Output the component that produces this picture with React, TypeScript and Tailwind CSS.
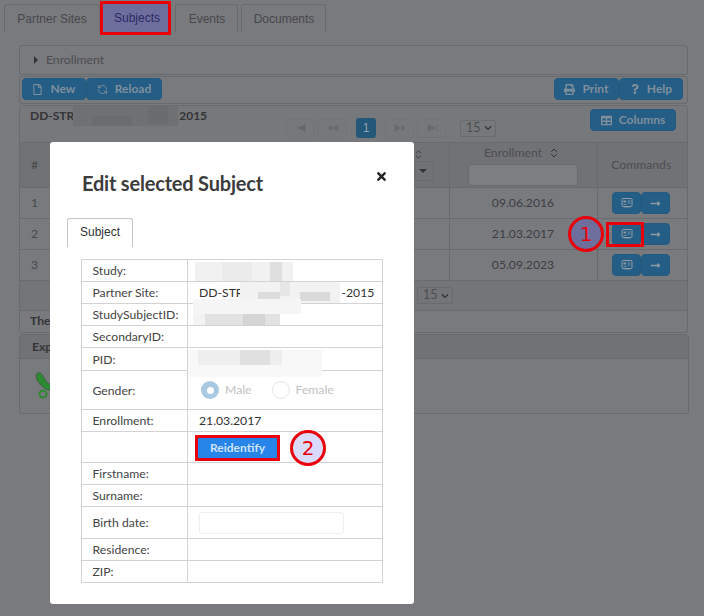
import { ChevronsUpDown, RefreshCcw } from 'lucide-react'
import { FaChevronDown, FaLongArrowAltRight, FaPrint, FaQuestion, FaRegFile, FaTable, FaTimes } from 'react-icons/fa'

const btn = 'flex items-center justify-center gap-[7px] h-[22px] rounded-[4px] bg-[#245e87] border border-[#235a80] text-[12px] font-bold text-[#7f8e9b]'
const line = 'border-[#6a6b6e]'

// pixelated redaction cells: [left, top, width, height, colour]
type Cell = [number, number, number, number, string]

function Blur({ cells }: { cells: Cell[] }) {
 return (
  <>
   {cells.map(([left, top, width, height, background], i) => (
    <span key={i} className="absolute block" style={{ left, top, width, height, background }} />
   ))}
  </>
 )
}

function PagerIcon({ d }: { d: string }) {
 return (
  <svg width="14" height="8" viewBox="0 0 14 8" fill="#68696c" stroke="#68696c" strokeWidth="0.6">
   <path d={d} />
  </svg>
 )
}

function Pager() {
 const box = 'flex items-center justify-center w-[29px] h-[19px] rounded-[3px] border border-[#737478]'
 return (
  <div className="flex items-center">
   <span className={`${box} mr-[3px]`}><PagerIcon d="M2 0.5V7.5M11 0.5V7.5L4 4Z" /></span>
   <span className={`${box} mr-[9px]`}><PagerIcon d="M12 0.5V7.5L7 4ZM6 1L2 4L6 7" /></span>
   <span className="flex items-center justify-center w-5 h-5 rounded-[3px] bg-[#235878] font-['Liberation_Sans',sans-serif] text-[12px] text-[#8fa2b0] mr-[9px]">1</span>
   <span className={`${box} mr-[3px]`}><PagerIcon d="M2 0.5V7.5L7 4ZM8 1L12 4L8 7" /></span>
   <span className={`${box} mr-[14px]`}><PagerIcon d="M3 0.5V7.5L10 4ZM12 0.5V7.5" /></span>
   <PageSize />
  </div>
 )
}

function PageSize() {
 return (
  <span className={`flex items-center gap-[3px] w-9 h-[17px] pl-[5px] rounded-[2px] border ${line} text-[12.5px] text-[#4c4d50]`}>
   15 <FaChevronDown className="text-[8px] text-[#333436]" />
  </span>
 )
}

function CardIcon() {
 return (
  <svg width="12" height="11" viewBox="0 0 12 11" fill="none" stroke="#8f9aa3">
   <rect x="1" y="0.5" width="10" height="8" rx="1" />
   <rect x="2.5" y="2.5" width="2.5" height="2" fill="#8f9aa3" stroke="none" />
   <path d="M2.5 6.5H5.5M6.5 3H9.5M6.5 5H9.5M4 8.5V10M6 8.5V10M8 8.5V10" strokeWidth="0.8" />
  </svg>
 )
}

function RowActions({ hot }: { hot?: boolean }) {
 return (
  <div className="flex justify-center pr-[2px]">
   <span className={`${btn} w-[29px] ${hot ? 'bg-[#1f4a90] border-[#1f4a90]' : ''}`}><CardIcon /></span>
   <span className={`${btn} w-[29px]`}><FaLongArrowAltRight className="text-[11px] text-[#8f9aa3]" /></span>
  </div>
 )
}

function BackgroundPage() {
 const rows = [
  ['1', '09.06.2016'],
  ['2', '21.03.2017'],
  ['3', '05.09.2023'],
 ]
 const tab = `flex items-center justify-center rounded-t-[3px] border border-b-0 ${line}`
 return (
  <div className="h-[616px] bg-[#797a7e] font-['Lato',sans-serif] text-[12.2px] text-[#3d3e41] overflow-hidden">
   <div className="flex h-[28px] mt-1 pl-1 font-['Liberation_Sans',sans-serif] text-[12px] text-[#47484b]">
    <div className={`${tab} w-[96px]`}>Partner Sites</div>
    <div className="flex items-center justify-center w-[66px] ml-[3px] pl-[2px] bg-[#6e6e9c] text-[#2b2b66]">Subjects</div>
    <div className={`${tab} w-[63px] ml-[6px] pl-[1px]`}>Events</div>
    <div className={`${tab} w-[85px] ml-[3px] pl-[1px]`}>Documents</div>
   </div>
   <div className="ml-[19px] w-[669px] mt-[13px]">
    <div className={`flex items-center h-[30px] pl-[14px] gap-[8px] rounded-[3px] border ${line} text-[#4c4d50]`}>
     <span className="w-0 h-0 border-y-[4px] border-y-transparent border-l-[4px] border-l-[#333436]" />
     Enrollment
    </div>
    <div className={`flex justify-between h-[28px] mt-[1px] pt-[1px] pl-[2px] pr-[4px] rounded-[3px] border ${line}`}>
     <div className="flex">
      <span className={`${btn} w-[64px]`}><FaRegFile className="text-[11px]" />New</span>
      <span className={`${btn} w-[76px]`}><RefreshCcw size={11} />Reload</span>
     </div>
     <div className="flex">
      <span className={`${btn} w-[65px]`}><FaPrint className="text-[11px]" />Print</span>
      <span className={`${btn} w-[64px]`}><FaQuestion className="text-[10px]" />Help</span>
     </div>
    </div>
    <div className={`relative mt-[1px] rounded-[3px] border ${line}`}>
     <div className="relative h-[36px] pl-[10px] pt-[1px] text-[12px] font-bold text-[#333436] bg-[#77787c]">
      DD-STR<span className="inline-block w-[105px] h-[13px]" />2015
      <Blur cells={[[53, 0, 105, 20, '#6f7074'], [72, 10, 40, 10, '#6b6c70'], [128, 0, 20, 18, '#6b6c70']]} />
     </div>
     <span className={`${btn} absolute right-[11px] top-[3px] w-[86px]`}><FaTable className="text-[11px]" />Columns</span>
     <div className="absolute top-[12px] left-[266px]"><Pager /></div>
     <table className="w-full border-collapse table-fixed">
      <thead>
       <tr className={`h-[45px] bg-[#717276] border-y ${line}`}>
        <th className="w-[30px] font-normal text-left pl-[11px] text-[#47484b]">#</th>
        <th className="font-normal">
         <div className="flex flex-col items-end pr-[15px] text-[#333436]">
          <ChevronsUpDown size={11} className="mb-[1px] mr-[10px]" />
          <span className={`flex items-center justify-end w-[19px] h-[20px] pr-[6px] rounded-r-[3px] border ${line}`}><span className="w-0 h-0 border-x-[4px] border-x-transparent border-t-[4px] border-t-[#333436]" /></span>
         </div>
        </th>
        <th className={`w-[148px] font-normal border-x ${line}`}>
         <div className="flex items-center justify-center gap-[6px] pr-[2px] pb-[1px] text-[#4c4d50]">Enrollment<ChevronsUpDown size={12} className="text-[#333436]" /></div>
         <div className={`ml-[18px] w-[110px] h-[22px] rounded-[3px] border ${line} bg-[#7d7e82]`} />
        </th>
        <th className="w-[90px] pr-[2px] font-normal text-[#4c4d50]">Commands</th>
       </tr>
      </thead>
      <tbody>
       {rows.map(([n, date], i) => (
        <tr key={n} className={`h-[31px] border-b ${line}`}>
         <td className="pl-[11px] text-[#47484b]">{n}</td>
         <td></td>
         <td className={`text-center border-x ${line}`}>{date}</td>
         <td><RowActions hot={i === 1} /></td>
        </tr>
       ))}
      </tbody>
     </table>
     <div className={`flex h-[30px] items-center justify-end pr-[234px] bg-[#747579] border-b ${line}`}><PageSize /></div>
     <div className="h-[21px] pl-[10px] font-bold leading-[20px] text-[#333436]">The</div>
    </div>
    <div className={`mt-[1px] w-[670px] rounded-[3px] border ${line}`}>
     <div className={`h-[24px] pl-[12px] bg-[#717276] border-b ${line} font-bold leading-[23px] text-[#333436]`}>Exp</div>
     <div className="h-[54px] pl-[13px] pt-[12px]">
      <svg width="20" height="30" viewBox="0 0 20 30" fill="none">
       <path d="M3 4C4 1 8 1 10 5C12 9 14 12 18 14L18 20C11 18 7 14 4 9Z" fill="#2c8a30" stroke="#44604a" />
       <circle cx="10" cy="23" r="3.5" stroke="#2c8a30" strokeWidth="2" />
      </svg>
     </div>
    </div>
   </div>
  </div>
 )
}

function Modal() {
 const td1 = 'pl-[10.5px] pt-[2px] border border-[#d3d3d3] text-[#444]'
 const td2 = 'relative pl-[11px] pt-[2px] border border-[#d3d3d3] text-[#333]'
 return (
  <div className="absolute left-[50px] top-[142px] w-[364px] h-[462px] rounded-[3px] bg-white font-['Lato',sans-serif] text-[12.2px]">
   <h2 className="absolute left-[32px] top-[28px] text-[20px] leading-[26px] tracking-[-0.2px] font-bold text-[#3c3c3c]">Edit selected Subject</h2>
   <FaTimes className="absolute left-[325px] top-[28px] text-[13px] text-[#222]" />
   <div className="absolute left-[17px] top-[76px] flex items-center justify-center w-[66px] h-[29px] pb-[2px] rounded-t-[3px] border border-b-0 border-[#c4c4c4] font-['Liberation_Sans',sans-serif] text-[12px] text-[#333]">Subject</div>
   <table className="absolute left-[31px] top-[117px] w-[302px] border-collapse table-fixed">
    <tbody>
     <tr className="h-[22px]">
      <td className={`${td1} w-[106px]`}>Study:</td>
      <td className={td2}><Blur cells={[[7, 2, 98, 19, '#f1f1f1'], [34, 2, 30, 19, '#ebebeb'], [82, 2, 12, 19, '#dfdfdf']]} /></td>
     </tr>
     <tr className="h-[22px]">
      <td className={td1}>Partner Site:</td>
      <td className={td2}>
       DD-STR<span className="inline-block w-[98px]" />-2015
       <Blur cells={[[52, 0, 100, 21, '#f2f2f2'], [70, 10, 22, 9, '#dcdcdc'], [112, 10, 30, 9, '#d9d9d9'], [92, 0, 10, 14, '#e6e6e6']]} />
      </td>
     </tr>
     <tr className="h-[22px]">
      <td className={td1}>StudySubjectID:</td>
      <td className={td2}>
       <Blur cells={[[5, -5, 108, 15, '#f5f5f5'], [5, 10, 87, 11, '#f3f3f3'], [17, 10, 75, 11, '#e2e2e2'], [55, 10, 22, 11, '#d5d5d5']]} />
      </td>
     </tr>
     <tr className="h-[22px]"><td className={td1}>SecondaryID:</td><td className={td2}></td></tr>
     <tr className="h-[23px]">
      <td className={td1}>PID:</td>
      <td className={td2}>
       <Blur cells={[[0, 2, 134, 27, '#f8f8f8'], [10, 2, 84, 15, '#eeeeee'], [52, 2, 30, 15, '#e0e0e0']]} />
      </td>
     </tr>
     <tr className="h-[39px]">
      <td className={td1}>Gender:</td>
      <td className={td2}>
       <div className="flex items-center mt-[-1px] text-[#c2c2c2]">
        <span className="flex items-center justify-center w-[18px] h-[18px] mr-[6px] ml-[2px] rounded-full bg-[#a9c9e2]"><span className="w-[7px] h-[7px] rounded-full bg-white" /></span>
        Male
        <span className="w-[18px] h-[18px] mr-[6px] ml-[20px] rounded-full border border-[#e6e6e6]" />
        Female
       </div>
      </td>
     </tr>
     <tr className="h-[22px]"><td className={td1}>Enrollment:</td><td className={td2}>21.03.2017</td></tr>
     <tr className="h-[31px]">
      <td className={td1}></td>
      <td className={td2}>
       <div className="flex items-center justify-center w-[85px] h-[26px] ml-[-4px] border-[3px] border-[#e8000b] bg-[#2784e8] text-[#cfe2fb] font-bold text-[12px]">Reidentify</div>
      </td>
     </tr>
     <tr className="h-[22px]"><td className={td1}>Firstname:</td><td className={td2}></td></tr>
     <tr className="h-[22px]"><td className={td1}>Surname:</td><td className={td2}></td></tr>
     <tr className="h-[32px]"><td className={td1}>Birth date:</td><td className={td2}><div className="w-[145px] h-[22px] mt-[-2px] rounded-[3px] border border-[#eeeeee]" /></td></tr>
     <tr className="h-[22px]"><td className={td1}>Residence:</td><td className={td2}></td></tr>
     <tr className="h-[22px]"><td className={td1}>ZIP:</td><td className={td2}></td></tr>
    </tbody>
   </table>
  </div>
 )
}

function Callout({ n, className }: { n: number; className: string }) {
 return (
  <div className={`absolute flex items-center justify-center w-[36px] h-[36px] rounded-full border-[3px] border-[#e8000b] font-['DejaVu_Sans',sans-serif] text-[20px] text-[#e8000b] ${className}`}>{n}</div>
 )
}

export default function App() {
 return (
  <div className="relative w-[704px] h-[616px] overflow-hidden">
   <BackgroundPage />
   <Modal />
   <div className="absolute left-[100px] top-[1px] w-[71px] h-[34px] border-[3px] border-[#e8000b]" />
   <div className="absolute left-[606px] top-[222px] w-[38px] h-[25px] border-[3px] border-[#e8000b]" />
   <Callout n={1} className="left-[568px] top-[216px] bg-[#6e6e9c]" />
   <Callout n={2} className="left-[290px] top-[430px] bg-[#dadafb]" />
  </div>
 )
}
